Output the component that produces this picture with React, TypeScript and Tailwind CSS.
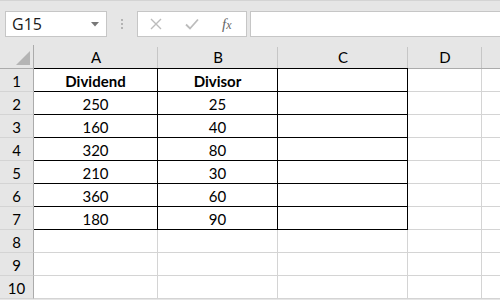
const cols = [
  { name: "A", w: "w-[124px]" },
  { name: "B", w: "w-[120px]" },
  { name: "C", w: "w-[130px]" },
  { name: "D", w: "w-[74px]" },
  { name: "E", w: "w-[40px]" },
];

const rows: (string | null)[][] = [
  ["Dividend", "Divisor", ""],
  ["250", "25", ""],
  ["160", "40", ""],
  ["320", "80", ""],
  ["210", "30", ""],
  ["360", "60", ""],
  ["180", "90", ""],
  [null, null, null],
  [null, null, null],
  [null, null, null],
];

export default function App() {
  return (
    <div
      className="w-[500px] h-[300px] overflow-hidden bg-[#e6e6e6] text-black"
      style={{ fontFamily: "Lato, 'Liberation Sans', sans-serif" }}
    >
      {/* Name box + formula bar */}
      <div className="h-[45px] border-t border-[#d4d4d4] flex items-start pt-[10px]">
        <div
          className="ml-[5px] w-[102px] h-[26px] bg-white border border-[#c6c6c6] flex items-center justify-between pl-[6px] pr-[7px] text-[16px] text-[#1a1a1a]"
          style={{ fontFamily: "'Open Sans', sans-serif" }}
        >
          <span>G15</span>
          <svg width="8" height="5" viewBox="0 0 8 5">
            <path d="M0 0 L8 0 L4 4.5 Z" fill="#777" />
          </svg>
        </div>
        <div className="ml-[14px] mt-[8px] flex flex-col gap-[2px]">
          <div className="w-[2px] h-[2px] bg-[#b3b3b3]" />
          <div className="w-[2px] h-[2px] bg-[#b3b3b3]" />
          <div className="w-[2px] h-[2px] bg-[#b3b3b3]" />
        </div>
        <div className="ml-[14px] w-[110px] h-[26px] bg-white border border-[#c6c6c6] flex items-center">
          <svg className="ml-[12px]" width="12" height="12" viewBox="0 0 12 12">
            <path d="M1 1 L11 11 M11 1 L1 11" stroke="#bcbcbc" strokeWidth="1.4" />
          </svg>
          <svg className="ml-[23px]" width="14" height="12" viewBox="0 0 14 12">
            <path d="M1 6.5 L5 10.5 L13 1.5" stroke="#bcbcbc" strokeWidth="1.8" fill="none" />
          </svg>
          <span
            className="ml-[23px] text-[15px] italic text-[#666]"
            style={{ fontFamily: "'Liberation Serif', serif" }}
          >
            f<span className="text-[12px]">x</span>
          </span>
        </div>
        <div className="ml-[3px] flex-1 h-[26px] bg-white border border-[#c6c6c6] border-r-0" />
      </div>

      {/* Column headers */}
      <div className="flex h-[24px]">
        <div className="w-[34px] shrink-0 border-r border-b border-[#ababab] relative">
          <svg className="absolute right-[3px] bottom-[3px]" width="14" height="14" viewBox="0 0 14 14">
            <path d="M14 0 L14 14 L0 14 Z" fill="#b4b4b4" />
          </svg>
        </div>
        {cols.map((c, i) => (
          <div
            key={c.name}
            className={`${c.w} shrink-0 relative flex items-center justify-center pt-[2px] text-[15px] border-b ${
              i < 3 ? "border-black" : "border-[#ababab]"
            }`}
          >
            {c.name !== "E" && c.name}
            <div className="absolute right-0 top-[2px] bottom-0 w-px bg-[#c6c6c6]" />
          </div>
        ))}
      </div>

      {/* Rows */}
      {rows.map((r, ri) => (
        <div key={ri} className="flex h-[23px]">
          <div className="w-[34px] shrink-0 border-r border-b border-[#ababab] border-b-[#d4d4d4] flex items-center justify-center pt-[2px] text-[15px]">
            {ri + 1}
          </div>
          {cols.map((c, ci) => {
            const inTable = ci < 3 && ri < 7;
            const val = ci < 3 ? r[ci] : null;
            return (
              <div
                key={c.name}
                className={`${c.w} shrink-0 bg-white border-r border-b flex items-center justify-center pt-[2px] text-[15px] ${
                  inTable ? "border-black" : "border-[#d4d4d4]"
                } ${ri === 0 ? "font-bold" : ""}`}
              >
                {val}
              </div>
            );
          })}
        </div>
      ))}
    </div>
  );
}
